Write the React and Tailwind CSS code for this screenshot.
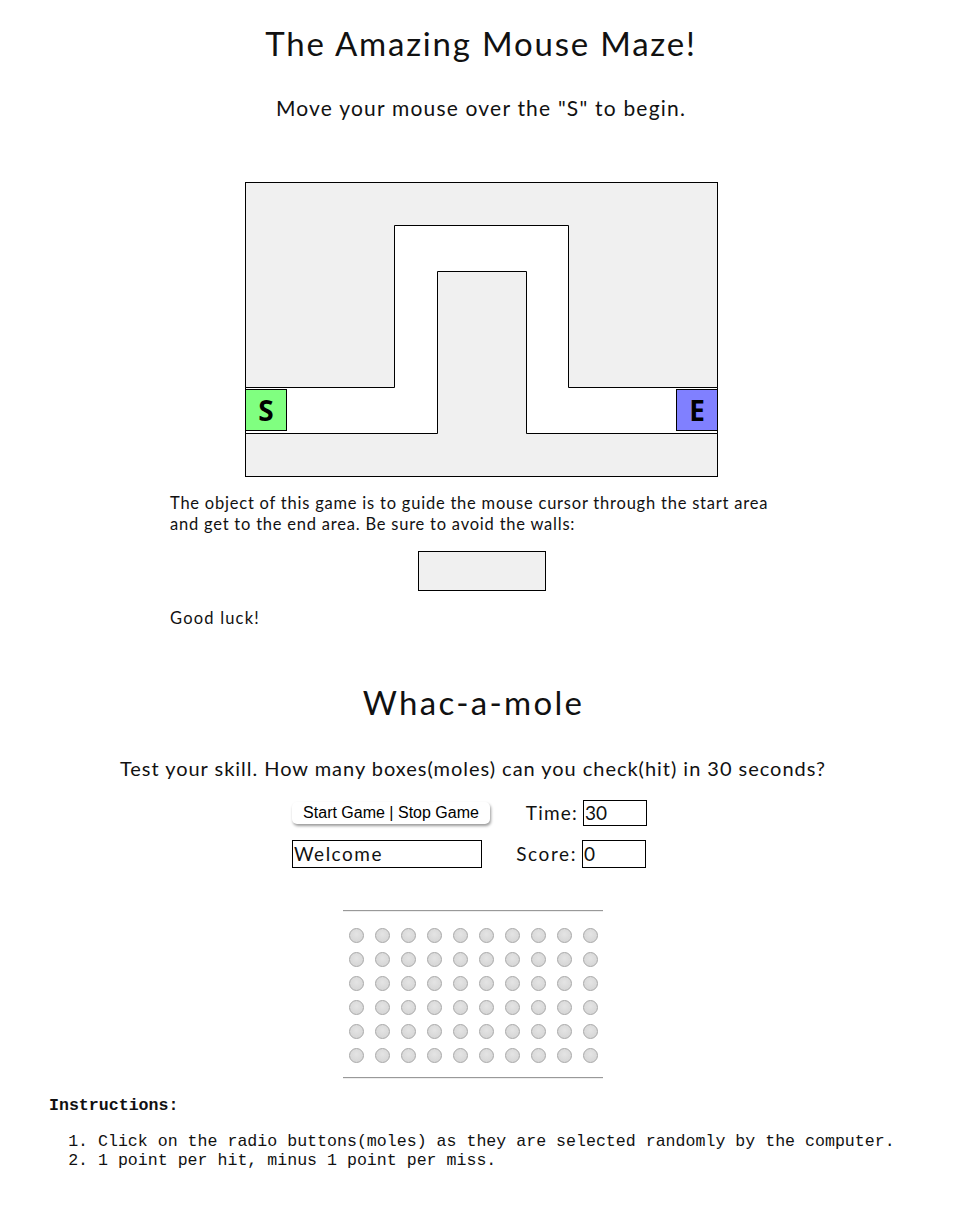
const GOTHIC = { fontFamily: '"Lato", "DejaVu Sans", sans-serif' };

function Maze() {
  return (
    <div className="relative w-[473px] h-[295px]">
      <svg width="473" height="295" viewBox="0 0 473 295" className="block">
        <rect x="0.5" y="0.5" width="472" height="294" fill="#f0f0f0" stroke="#000" />
        <path
          d="M0.5 205.5 H149.5 V43.5 H323.5 V205.5 H472.5 V251.5 H281.5 V89.5 H192.5 V251.5 H0.5 Z"
          fill="#fff"
          stroke="#000"
        />
      </svg>
      <div className="absolute left-0 top-[207px] w-[42px] h-[42px] bg-[#80ff80] border border-black flex items-center justify-center text-[28px] font-bold text-black" style={{ fontFamily: '"Open Sans", sans-serif' }}>
        S
      </div>
      <div className="absolute right-0 top-[207px] w-[42px] h-[42px] bg-[#8080ff] border border-black flex items-center justify-center text-[28px] font-bold text-black" style={{ fontFamily: '"Open Sans", sans-serif' }}>
        E
      </div>
    </div>
  );
}

function Radio() {
  return (
    <div className="w-[15px] h-[15px] rounded-full border border-[#a8a8a8] bg-[radial-gradient(circle_at_50%_40%,#e4e4e4,#d2d2d2)]" />
  );
}

export default function App() {
  const rows = [0, 1, 2, 3, 4, 5];
  const cols = [0, 1, 2, 3, 4, 5, 6, 7, 8, 9];

  return (
    <div className="w-[958px] min-h-[1223px] bg-white text-[#111]">
      <div style={GOTHIC} className="flex flex-col items-center">
        <h1 className="mt-[22px] ml-[4px] text-[33px] leading-[42px] font-normal tracking-[1.8px]">The Amazing Mouse Maze!</h1>
        <p className="mt-[31px] ml-[4px] text-[21px] leading-[26px] tracking-[1.2px]">Move your mouse over the "S" to begin.</p>
      </div>
      <div className="mt-[61px] ml-[245px]">
        <Maze />
      </div>

      <div style={GOTHIC} className="pl-[170px] mt-[16px] text-[16.5px] leading-[21px] tracking-[0.78px]">
        <p className="w-[612px]">The object of this game is to guide the mouse cursor through the start area and get to the end area. Be sure to avoid the walls:</p>
        <div className="mt-[16px] ml-[248px] w-[128px] h-[40px] bg-[#f0f0f0] border border-black" />
        <p className="mt-[17px] tracking-[1.2px]">Good luck!</p>
      </div>

      <div style={GOTHIC} className="flex flex-col items-center">
        <h2 className="mt-[52px] ml-[-11px] text-[33px] leading-[42px] font-normal tracking-[2.3px]">Whac-a-mole</h2>
        <p className="mt-[32px] ml-[-12px] text-[20px] leading-[26px] tracking-[0.97px]">Test your skill. How many boxes(moles) can you check(hit) in 30 seconds?</p>
      </div>

      <div style={GOTHIC} className="mt-[19px] ml-[292px] w-[355px] flex flex-col gap-[14px]">
        <div className="flex items-center justify-between h-[26px]">
          <button
            className="w-[198px] h-[22px] rounded-[5px] bg-white shadow-[1px_2px_3px_rgba(0,0,0,0.4)] text-[16px] leading-[22px] text-black"
            style={{ fontFamily: '"Liberation Sans", Arial, sans-serif' }}
          >
            Start Game | Stop Game
          </button>
          <div className="flex items-center gap-[5px]">
            <span className="text-[19px] tracking-[1.2px]">Time:</span>
            <div className="w-[64px] h-[26px] border border-black text-[19px] leading-[24px] pl-[1px]">30</div>
          </div>
        </div>
        <div className="flex items-center justify-between h-[28px] pr-[1px]">
          <div className="w-[190px] h-[28px] border border-black text-[19px] leading-[26px] pl-[1px] tracking-[1.5px]">Welcome</div>
          <div className="flex items-center gap-[5px]">
            <span className="text-[19px] tracking-[1.6px]">Score:</span>
            <div className="w-[64px] h-[28px] border border-black text-[19px] leading-[26px] pl-[1px]">0</div>
          </div>
        </div>
      </div>

      <div className="mt-[42px] ml-[343px] w-[260px]">
        <div className="h-[2px] border-t border-[#999] bg-[#eee]" />
        <div className="pt-[11px] pb-[10px]">
          {rows.map((r) => (
            <div key={r} className="flex h-[24px] items-center">
              {cols.map((c) => (
                <div key={c} className="w-[26px] flex justify-center">
                  <Radio />
                </div>
              ))}
            </div>
          ))}
        </div>
        <div className="h-[2px] border-t border-[#999] bg-[#eee]" />
      </div>

      <div className="mt-[17px] pl-[49px] text-[16.6px] leading-[19px]" style={{ fontFamily: '"Liberation Mono", "Courier New", monospace' }}>
        <div className="font-bold">Instructions:</div>
        <ol className="mt-[17px] list-decimal pl-[49px]">
          <li>Click on the radio buttons(moles) as they are selected randomly by the computer.</li>
          <li>1 point per hit, minus 1 point per miss.</li>
        </ol>
      </div>
    </div>
  );
}
